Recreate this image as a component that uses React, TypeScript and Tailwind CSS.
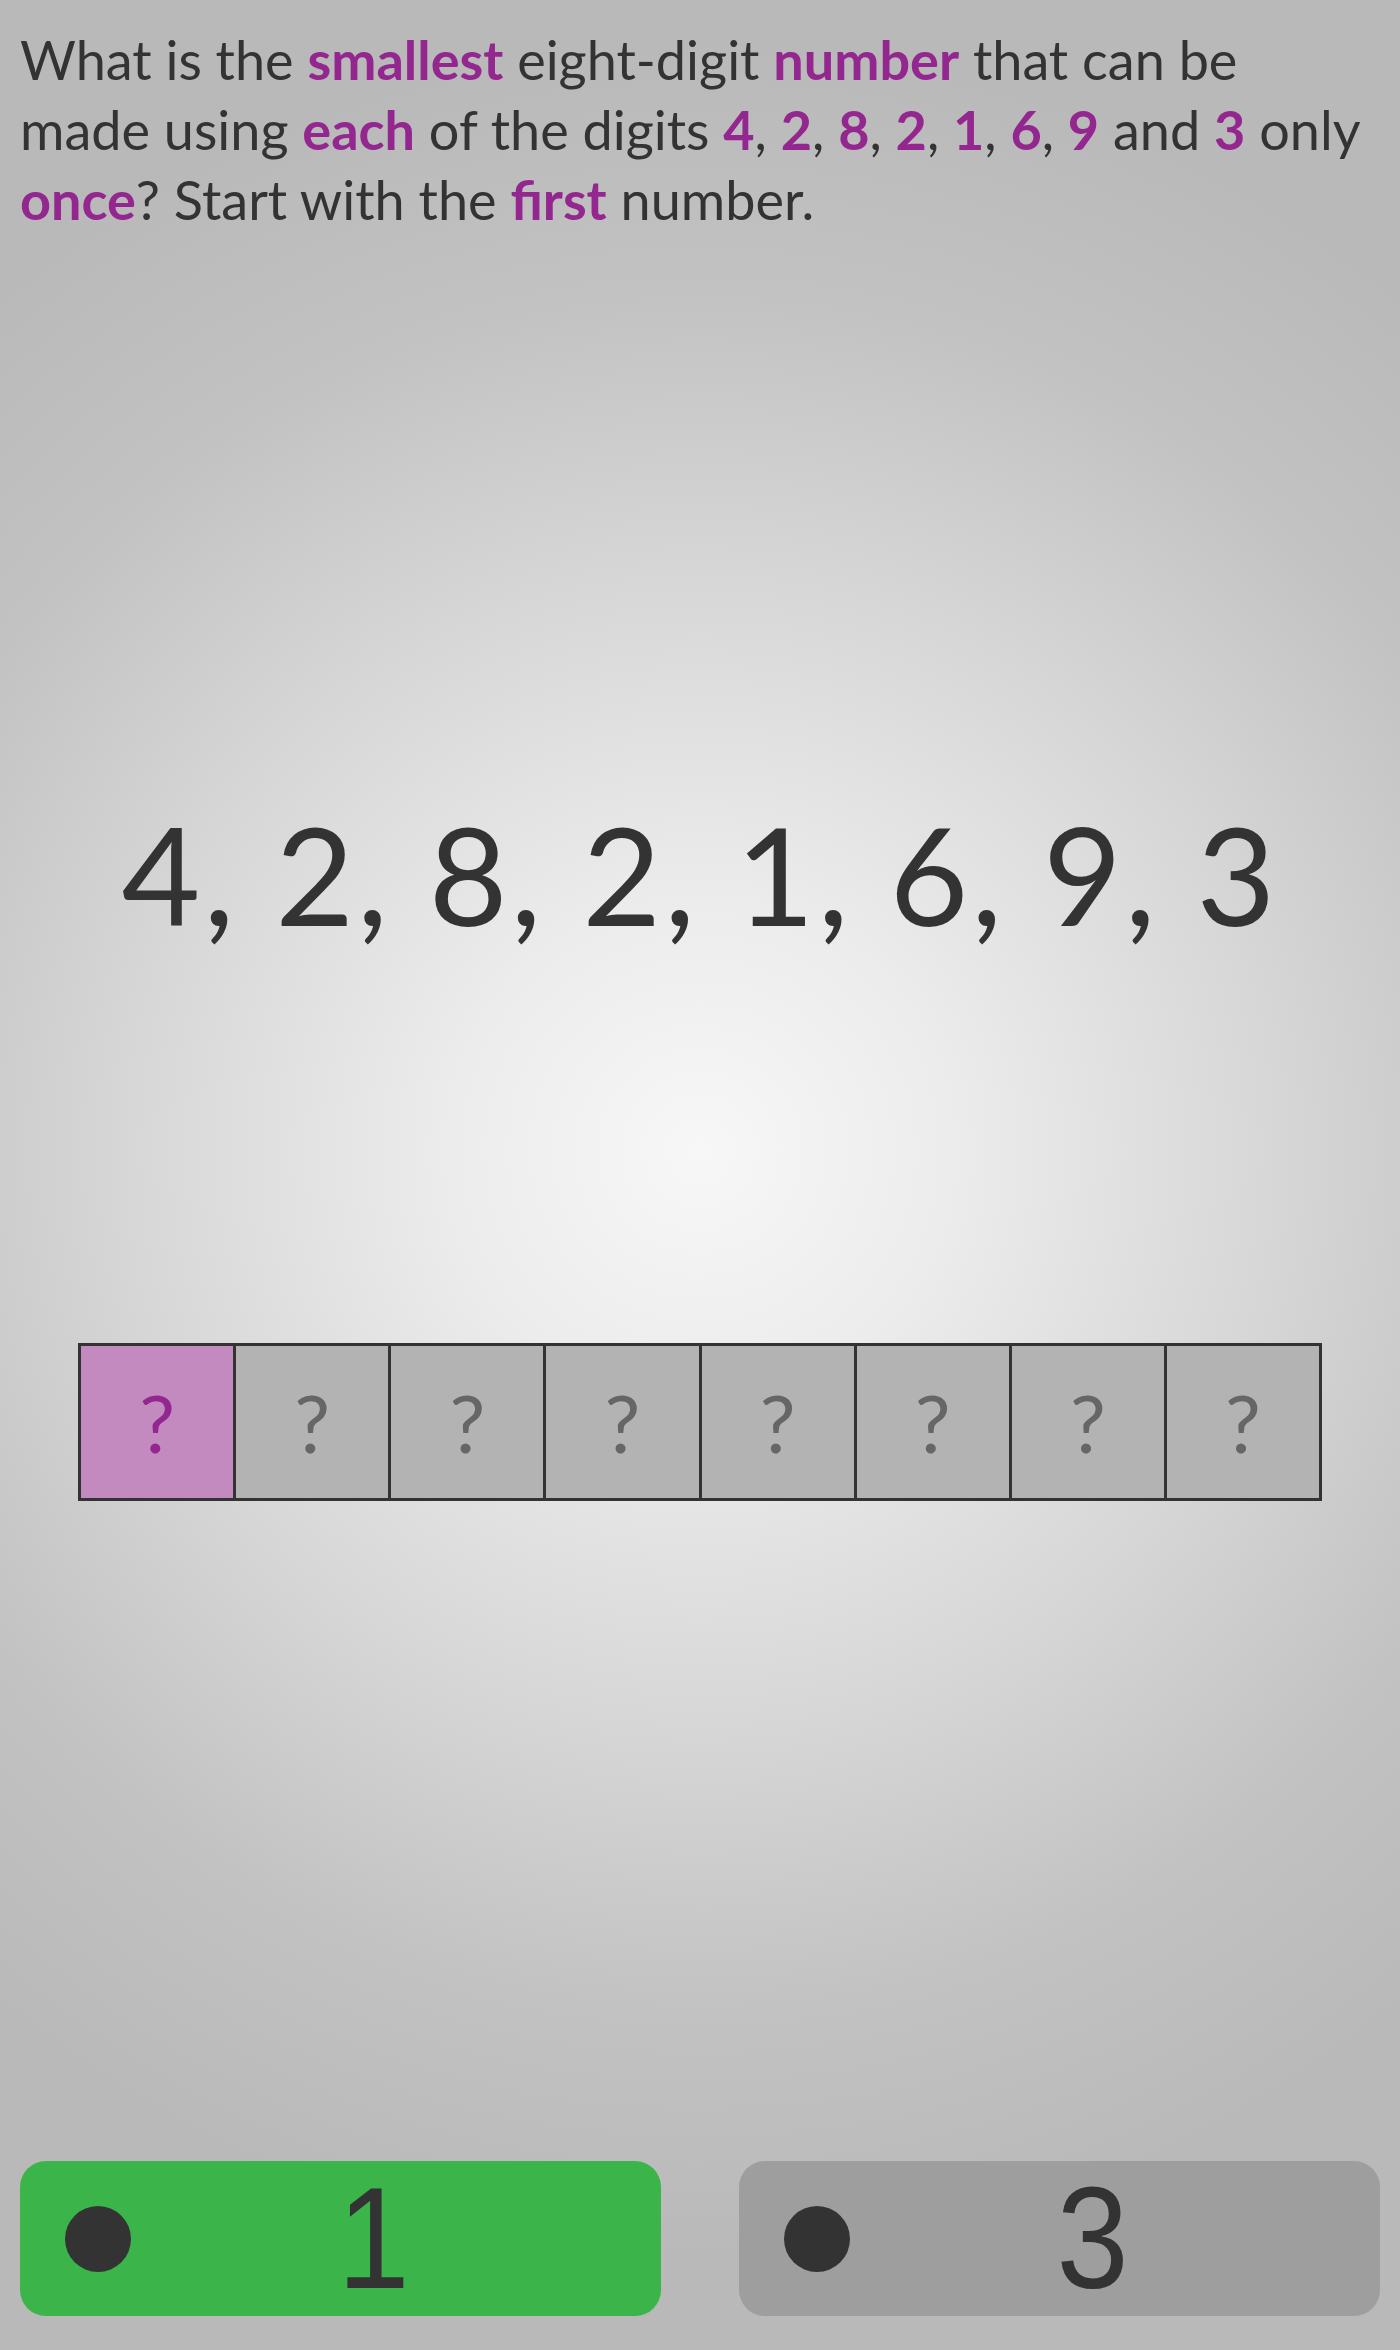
const DIGITS = ['4', '2', '8', '2', '1', '6', '9', '3'];

function Hi({ children }: { children: React.ReactNode }) {
  return <span className="font-bold text-[#93278f]">{children}</span>;
}

export default function App() {
  return (
    <div
      className="w-[1400px] h-[2350px] flex flex-col text-[#333333] bg-[radial-gradient(circle_at_50%_49%,#f7f7f7_0%,#ececec_18%,#d6d6d6_42%,#c2c2c2_62%,#b9b9b9_80%)]"
      style={{ fontFamily: 'Lato, "Noto Sans", sans-serif' }}
    >
      <p className="pt-[25px] pl-[20px] pr-[10px] text-[54px] leading-[70px]">
        What is the <Hi>smallest</Hi> eight-digit <Hi>number</Hi> that can be
        <br />
        made using <Hi>each</Hi> of the digits <Hi>4</Hi>, <Hi>2</Hi>, <Hi>8</Hi>, <Hi>2</Hi>,{' '}
        <Hi>1</Hi>, <Hi>6</Hi>, <Hi>9</Hi> and <Hi>3</Hi> only
        <br />
        <Hi>once</Hi>? Start with the <Hi>first</Hi> number.
      </p>

      <div className="mt-[571px] text-center text-[136px] leading-none tracking-[3px]">
        4, 2, 8, 2, 1, 6, 9, 3
      </div>

      <div className="mt-[401px] mx-[78px] h-[158px] flex border-[3px] border-[#333333]">
        {DIGITS.map((_, i) => (
          <div
            key={i}
            className={
              i === 0
                ? 'flex-1 flex items-center justify-center bg-[#c28abf] text-[#93278f] text-[80px] leading-none'
                : 'flex-1 flex items-center justify-center bg-[#b3b3b3] text-[#666666] text-[80px] leading-none border-l-[3px] border-[#333333]'
            }
          >
            ?
          </div>
        ))}
      </div>

      <div className="mt-auto mb-[34px] px-[20px] flex gap-[78px]">
        <div className="flex-1 h-[155px] rounded-[26px] bg-[#3bb54a] flex items-center px-[45px]">
          <div className="w-[66px] h-[66px] rounded-full bg-[#333333]" />
          <span
            className="flex-1 text-center text-[144px] leading-none text-[#333333] scale-x-[0.9]"
            style={{ fontFamily: '"Liberation Sans", Arial, sans-serif' }}
          >
            1
          </span>
        </div>
        <div className="flex-1 h-[155px] rounded-[26px] bg-[#9e9e9e] flex items-center px-[45px]">
          <div className="w-[66px] h-[66px] rounded-full bg-[#333333]" />
          <span
            className="flex-1 text-center text-[144px] leading-none text-[#333333] scale-x-[0.9]"
            style={{ fontFamily: '"Liberation Sans", Arial, sans-serif' }}
          >
            3
          </span>
        </div>
      </div>
    </div>
  );
}
